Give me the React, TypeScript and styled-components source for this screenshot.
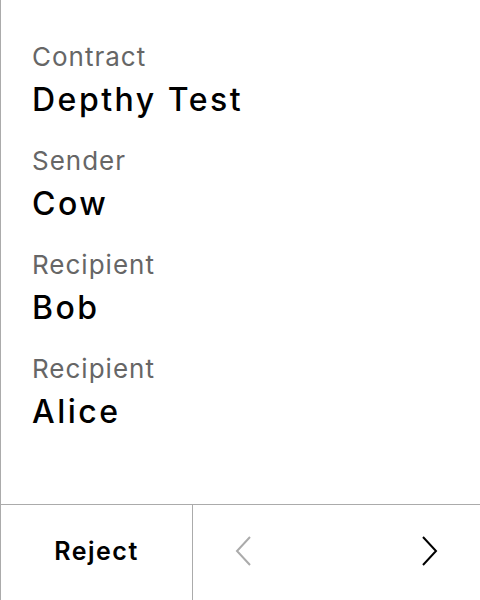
import styled, { createGlobalStyle } from "styled-components";

const GlobalStyle = createGlobalStyle`
  html, body {
    margin: 0;
    padding: 0;
    background: #ffffff;
  }
  body {
    font-family: Inter, "Noto Sans", sans-serif;
  }
`;

const Screen = styled.div`
  width: 480px;
  height: 600px;
  box-sizing: border-box;
  border-left: 1px solid #ababab;
  display: flex;
  flex-direction: column;
  background: #ffffff;
`;

const Details = styled.div`
  flex: 1;
  display: flex;
  flex-direction: column;
  gap: 25px;
  padding: 41px 0 0 31px;
  border-bottom: 1px solid #ababab;
`;

const Field = styled.div`
  display: flex;
  flex-direction: column;
`;

const Label = styled.div`
  font-size: 26px;
  line-height: 32px;
  letter-spacing: 1px;
  color: #666666;
  margin-bottom: 7px;
`;

const Value = styled.div`
  font-size: 32px;
  line-height: 40px;
  font-weight: 500;
  letter-spacing: 2.5px;
  color: #000000;
`;

const ActionBar = styled.div`
  height: 95px;
  display: flex;
  flex-shrink: 0;
`;

const RejectButton = styled.button`
  width: 192px;
  border: none;
  border-right: 1px solid #ababab;
  background: transparent;
  font-family: Inter, "Noto Sans", sans-serif;
  font-size: 25px;
  font-weight: 600;
  letter-spacing: 1.5px;
  color: #000000;
  padding: 0 0 4px;
  cursor: pointer;
`;

const Pager = styled.div`
  flex: 1;
  display: flex;
  align-items: center;
  justify-content: space-between;
  padding: 0 42px 3px;
`;

const NavButton = styled.button<{ $disabled?: boolean }>`
  border: none;
  background: transparent;
  padding: 0;
  display: flex;
  color: ${(p) => (p.$disabled ? "#ababab" : "#000000")};
  cursor: ${(p) => (p.$disabled ? "default" : "pointer")};
`;

const Chevron = ({ dir }: { dir: "left" | "right" }) => (
  <svg width="16" height="30" viewBox="0 0 16 30" fill="none">
    <path
      d={dir === "left" ? "M15 1 L2 15 L15 29" : "M1 1 L14 15 L1 29"}
      stroke="currentColor"
      strokeWidth="2"
    />
  </svg>
);

const fields = [
  { label: "Contract", value: "Depthy Test" },
  { label: "Sender", value: "Cow" },
  { label: "Recipient", value: "Bob" },
  { label: "Recipient", value: "Alice" },
];

export default function App() {
  return (
    <>
      <GlobalStyle />
      <Screen>
        <Details>
          {fields.map((f, i) => (
            <Field key={i}>
              <Label>{f.label}</Label>
              <Value>{f.value}</Value>
            </Field>
          ))}
        </Details>
        <ActionBar>
          <RejectButton>Reject</RejectButton>
          <Pager>
            <NavButton $disabled>
              <Chevron dir="left" />
            </NavButton>
            <NavButton>
              <Chevron dir="right" />
            </NavButton>
          </Pager>
        </ActionBar>
      </Screen>
    </>
  );
}
